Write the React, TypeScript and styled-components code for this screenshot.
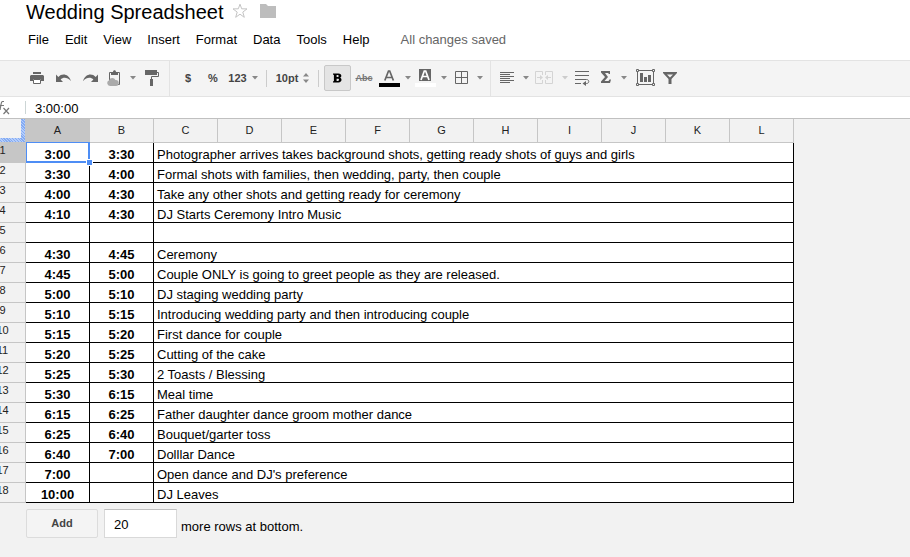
import React from "react";
import styled, { createGlobalStyle, css } from "styled-components";

const GlobalStyle = createGlobalStyle`
  * { box-sizing: border-box; }
  html, body { margin: 0; min-height: 100%; background: #f2f2f2; }
  body { font-family: "Liberation Sans", Arial, sans-serif; font-size: 13px; color: #000; overflow-x: hidden; }
  button, input { font-family: inherit; }
`;

const Header = styled.header`
  background: #fff;
  height: 60px;
  padding-left: 26px;
`;

const TitleRow = styled.div`
  display: flex;
  align-items: center;
  height: 24px;
`;

const Title = styled.h1`
  margin: 0 8px 0 0;
  font-size: 20px;
  line-height: 24px;
  font-weight: normal;
  white-space: nowrap;
`;

const TitleButton = styled.button`
  display: flex;
  padding: 0 0 2px;
  margin-right: 12px;
  border: 0;
  background: none;
`;

const MenuBar = styled.nav`
  display: flex;
  align-items: baseline;
  height: 30px;
  padding: 8px 0 0 2px;
  gap: 16px;
`;

const MenuItem = styled.button`
  padding: 0;
  border: 0;
  background: none;
  font-size: 13px;
  line-height: 16px;
  color: #000;
`;

const SaveStatus = styled.span`
  margin-left: 15px;
  color: #666;
  line-height: 16px;
  white-space: nowrap;
`;

const Toolbar = styled.div`
  display: flex;
  align-items: center;
  height: 37px;
  padding-left: 24px;
  border-top: 1px solid #e3e3e3;
  border-bottom: 1px solid #e3e3e3;
  background: #f4f4f4;
`;

const ToolGroup = styled.div<{ $start?: number; $end?: number }>`
  display: flex;
  flex: none;
  align-items: center;
  height: 35px;
  padding: 0 ${(p) => p.$end ?? 0}px 1px ${(p) => p.$start ?? 0}px;
  & + & { border-left: 1px solid #e3e3e3; }
`;

const ToolButton = styled.button<{ $width: number; $gap?: number; $active?: boolean }>`
  display: flex;
  flex: none;
  align-items: center;
  justify-content: center;
  gap: ${(p) => p.$gap ?? 7}px;
  width: ${(p) => p.$width}px;
  height: 26px;
  padding: 0;
  border: 1px solid transparent;
  border-radius: 2px;
  background: none;
  color: #444;
  font-size: 11px;
  font-weight: bold;
  line-height: 16px;
  ${(p) =>
    p.$active &&
    css`
      border-color: #c8c8c8;
      background: #e4e4e4;
      color: #000;
    `}
`;

const StruckText = styled.s`
  color: #777;
  font-size: 9px;
  line-height: 16px;
`;

const Separator = styled.span`
  flex: none;
  width: 1px;
  height: 17px;
  margin: 0 5px;
  background: #ccc;
`;

const FormulaBar = styled.div`
  display: flex;
  align-items: center;
  height: 22px;
  border-bottom: 1px solid #c0c0c0;
  background: #fff;
`;

const FormulaInput = styled.input`
  flex: 1;
  min-width: 0;
  height: 13px;
  margin-left: 15px;
  padding: 1px 0 0 9px;
  border: 0;
  border-left: 1px solid #ccd5d5;
  outline: 0;
  font-size: 13px;
`;

const SheetArea = styled.main`
  overflow: hidden;
`;

const Sheet = styled.table`
  width: 814px;
  margin-left: -20px;
  table-layout: fixed;
  border-collapse: separate;
  border-spacing: 0;
`;

const Corner = styled.td`
  position: relative;
  height: 24px;
  padding: 0;
  background: #f2f2f2;
`;

const CornerHatch = styled.span`
  position: absolute;
  inset: 0;
  border-right: 1px solid #c6c6c6;
  border-bottom: 1px solid #c6c6c6;
  background: repeating-linear-gradient(45deg, #b4cdfb 0 1px, #84abf2 1px 2px);
  clip-path: polygon(100% 0, 100% 100%, 0 100%, 0 calc(100% - 5px), calc(100% - 5px) calc(100% - 5px), calc(100% - 5px) 0);
`;

const ColumnHead = styled.th<{ $selected?: boolean }>`
  height: 24px;
  padding: 0 0 2px;
  border-right: 1px solid #c6c6c6;
  border-bottom: 1px solid #c6c6c6;
  background: ${(p) => (p.$selected ? "#c6c6c6" : "#f2f2f2")};
  color: #222;
  font-size: 11px;
  font-weight: normal;
`;

const RowHead = styled.th<{ $selected?: boolean }>`
  height: 20px;
  padding: 0;
  border-right: 1px solid #c6c6c6;
  border-bottom: 1px solid #c6c6c6;
  background: ${(p) => (p.$selected ? "#c6c6c6" : "#f2f2f2")};
  color: #222;
  font-size: 11px;
  font-weight: normal;
  line-height: 15px;
  vertical-align: top;
`;

const Cell = styled.td<{ $time?: boolean }>`
  position: relative;
  height: 20px;
  padding: 4px 3px 0;
  border-right: 1px solid #000;
  border-bottom: 1px solid #000;
  background: #fff;
  font-size: 13px;
  line-height: 15px;
  white-space: nowrap;
  ${(p) => p.$time && css`text-align: center; font-weight: bold;`}
`;

const Selection = styled.span`
  position: absolute;
  inset: -1px -1px -1px 0;
  border: 1px solid #4d8df5;
  border-right-width: 2px;
  border-bottom-width: 2px;
  z-index: 1;
`;

const FillHandle = styled.span`
  position: absolute;
  right: -5px;
  bottom: -5px;
  width: 7px;
  height: 7px;
  border: 1px solid #fff;
  background: #4d8df5;
`;

const AddRows = styled.form`
  display: flex;
  align-items: center;
  padding: 6px 0 0 26px;
`;

const AddButton = styled.button`
  width: 72px;
  height: 29px;
  margin-right: 6px;
  padding: 0 0 1px;
  border: 1px solid #dcdcdc;
  border-radius: 2px;
  background: #f4f4f4;
  color: #444;
  font-size: 11px;
  font-weight: bold;
`;

const CountInput = styled.input`
  width: 73px;
  height: 29px;
  margin-right: 4px;
  padding: 2px 9px 0;
  border: 1px solid #d9d9d9;
  border-top-color: #c0c0c0;
  font-size: 13px;
`;

const AddLabel = styled.label`
  padding-top: 6px;
  line-height: 16px;
`;

const ink = "#666";

const Caret = ({ light }: { light?: boolean }) => (
  <svg width="6" height="4" viewBox="0 0 6 4" aria-hidden="true">
    <path d="M0 0h6L3 3.500z" fill={light ? "#ccc" : "#888"} />
  </svg>
);

const StarIcon = () => (
  <svg width="16" height="16" viewBox="0 0 16 16" fill="none" stroke="#c4c4c4">
    <path d="M8 1.200l1.700 4.600 5.300.1-4.200 3.200 1.500 5.200L8 11.200l-4.300 3.100 1.500-5.200L1 5.900l5.300-.1z" />
  </svg>
);
const FolderIcon = () => (
  <svg width="16" height="14" viewBox="0 0 16 14">
    <path d="M0 0h6l2 2h8v12H0z" fill="#bdbdbd" />
  </svg>
);
const PrintIcon = () => (
  <svg width="14" height="12" viewBox="0 0 14 12" fill={ink}>
    <path d="M3 0h8v2H3zM1 3h12l1 1v5h-3V7H3v2H0V4z" />
    <path d="M3.500 7.500h7v4h-7z" fill="#fff" stroke={ink} />
  </svg>
);
const UndoIcon = ({ flip }: { flip?: boolean }) => (
  <svg width="15" height="8" viewBox="0 0 15 8">
    <g transform={flip ? "translate(15 0) scale(-1 1)" : undefined}>
      <path d="M0 .5V8h7L4.600 5.500C7 3.200 11 2.800 15 7 12.500-.3 6-1 2.300 3z" fill={ink} />
    </g>
  </svg>
);
const ClipboardIcon = () => (
  <svg width="14" height="16" viewBox="0 0 14 16">
    <path d="M2.500 2.500h10v12h-10z" fill="none" stroke={ink} />
    <path d="M4 2h2c0-2.500 3-2.500 3 0h2v3H4z" fill={ink} />
    <path d="M3 16a3 3 0 01-.8-5.800A3.300 3.300 0 018.400 10 3 3 0 019 16z" fill="#aaa" />
  </svg>
);
const PaintIcon = () => (
  <svg width="14" height="16" viewBox="0 0 14 16">
    <path d="M0 0h12v5H0zM5 9h3v7H5z" fill={ink} />
    <path d="M12 2.500h1.500v4h-7V9" fill="none" stroke={ink} />
  </svg>
);
const UpDownIcon = () => (
  <svg width="6" height="10" viewBox="0 0 6 10" fill="#888">
    <path d="M3 0l3 3.500H0zM3 10L0 6.500h6z" />
  </svg>
);
const BoldIcon = () => (
  <svg width="9" height="10" viewBox="0 0 10 10">
    <path d="M0 0h6c4 0 4 4 1.700 4.700C10.500 5.500 10 10 6 10H0V8.500h1v-7H0zM4 1.800v2.200h1.500c1 0 1-2.200 0-2.200zM4 5.700v2.500h1.600c1.400 0 1.400-2.500 0-2.500z" fill="#000" fillRule="evenodd" />
  </svg>
);
const TextColorIcon = () => (
  <svg width="21" height="18" viewBox="0 0 21 18">
    <path d="M5.800 11.500L9.500 2h1.200l3.700 9.500M7.300 8.500h6" fill="none" stroke={ink} strokeWidth="1.700" />
    <path d="M0 14h21v4H0z" fill="#000" />
  </svg>
);
const FillColorIcon = () => (
  <svg width="21" height="18" viewBox="0 0 21 18">
    <path d="M4 0h12v12H4z" fill={ink} />
    <path d="M6 11l3.300-9h1.400l3.300 9M7.300 7.500h5.400" fill="none" stroke="#fff" strokeWidth="1.700" />
    <path d="M0 14h21v4H0z" fill="#fff" />
  </svg>
);
const BordersIcon = () => (
  <svg width="13" height="14" viewBox="0 0 13 14" fill="none" stroke={ink}>
    <path d="M.5.5h12v12H.5zM6.500 0v13M0 6.500h13" />
  </svg>
);
const AlignIcon = () => (
  <svg width="14" height="12" viewBox="0 0 14 12" stroke={ink}>
    <path d="M0 .5h14M0 2.500h10M0 4.500h14M0 6.500h10M0 8.500h14M0 10.500h10" />
  </svg>
);
const MergeIcon = () => (
  <svg width="18" height="14" viewBox="0 0 18 14" fill="none" stroke="#d4d4d4">
    <path d="M7.500 4V.5h-7v12h7V9M10.500 4V.5h7v12h-7V9M2 6.500h4M16 6.500h-4" />
    <path d="M5 4l3 2.500L5 9zM13 4l-3 2.500L13 9z" fill="#d4d4d4" stroke="none" />
  </svg>
);
const WrapIcon = () => (
  <svg width="15" height="16" viewBox="0 0 15 16" fill="none" stroke={ink}>
    <path d="M0 1.500h14M0 5.500h14M0 9.500h11.500c3 0 3 4 0 4H9M0 13.500h6" />
    <path d="M11 11v5l-3.500-2.500z" fill={ink} stroke="none" />
  </svg>
);
const SumIcon = () => (
  <svg width="10" height="14" viewBox="0 0 10 14">
    <path d="M0 0h9v3H8L7 2H4l3 4-3.500 4H7.500l1-1.500H10L9 12H0v-1.500L4 6 0 1.500z" fill={ink} />
  </svg>
);
const ChartIcon = () => (
  <svg width="19" height="18" viewBox="0 0 19 18">
    <path d="M1.500 1.500h16v14h-16z" fill="none" stroke={ink} />
    <path d="M4 4h3v9H4zM8 8h3v5H8zM12 6h3v7h-3z" fill={ink} />
    <path d="M.5.5h2v2h-2zM16.500.5h2v2h-2zM.5 14.500h2v2h-2zM16.500 14.500h2v2h-2z" fill="#f4f4f4" stroke={ink} />
  </svg>
);
const FilterIcon = () => (
  <svg width="14" height="12" viewBox="0 0 14 12">
    <path d="M0 0h14v1L8.500 7v5h-3V7L0 1z" fill={ink} />
    <path d="M4 2.500h6L7 5.500z" fill="#f4f4f4" />
  </svg>
);
const FxIcon = () => (
  <svg width="10" height="14" viewBox="0 0 10 14" fill="none" stroke="#777" strokeWidth="1.200">
    <path d="M4 .5H2.500Q1.500.5 1 3.500L0 9M0 4.500h4M3.500 7l5.500 6M9 7l-5.500 6" />
  </svg>
);

const menus = ["File", "Edit", "View", "Insert", "Format", "Data", "Tools", "Help"];
const columns = ["A", "B", "C", "D", "E", "F", "G", "H", "I", "J", "K", "L"];
const rows: [string, string, string][] = [
  ["3:00", "3:30", "Photographer arrives takes background shots, getting ready shots of guys and girls"],
  ["3:30", "4:00", "Formal shots with families, then wedding, party, then couple"],
  ["4:00", "4:30", "Take any other shots and getting ready for ceremony"],
  ["4:10", "4:30", "DJ Starts Ceremony Intro Music"],
  ["", "", ""],
  ["4:30", "4:45", "Ceremony"],
  ["4:45", "5:00", "Couple ONLY is going to greet people as they are released."],
  ["5:00", "5:10", "DJ staging wedding party"],
  ["5:10", "5:15", "Introducing wedding party and then introducing couple"],
  ["5:15", "5:20", "First dance for couple"],
  ["5:20", "5:25", "Cutting of the cake"],
  ["5:25", "5:30", "2 Toasts / Blessing"],
  ["5:30", "6:15", "Meal time"],
  ["6:15", "6:25", "Father daughter dance groom mother dance"],
  ["6:25", "6:40", "Bouquet/garter toss"],
  ["6:40", "7:00", "Dolllar Dance"],
  ["7:00", "", "Open dance and DJ's preference"],
  ["10:00", "", "DJ Leaves"],
];

export default function App() {
  return (
    <>
      <GlobalStyle />
      <Header>
        <TitleRow>
          <Title>Wedding Spreadsheet</Title>
          <TitleButton aria-label="Star"><StarIcon /></TitleButton>
          <TitleButton aria-label="Move to folder"><FolderIcon /></TitleButton>
        </TitleRow>
        <MenuBar>
          {menus.map((m) => <MenuItem key={m}>{m}</MenuItem>)}
          <SaveStatus>All changes saved</SaveStatus>
        </MenuBar>
      </Header>
      <Toolbar role="toolbar">
        <ToolGroup $end={5}>
          <ToolButton $width={26} aria-label="Print"><PrintIcon /></ToolButton>
          <ToolButton $width={27} aria-label="Undo"><UndoIcon /></ToolButton>
          <ToolButton $width={26} aria-label="Redo"><UndoIcon flip /></ToolButton>
          <ToolButton $width={37} $gap={9} aria-label="Web clipboard"><ClipboardIcon /><Caret /></ToolButton>
          <ToolButton $width={24} aria-label="Paint format"><PaintIcon /></ToolButton>
        </ToolGroup>
        <ToolGroup $start={5}>
          <ToolButton $width={26}>$</ToolButton>
          <ToolButton $width={24}>%</ToolButton>
          <ToolButton $width={36} $gap={5}>123<Caret /></ToolButton>
          <Separator />
          <ToolButton $width={41} $gap={5}>10pt<UpDownIcon /></ToolButton>
          <Separator />
          <ToolButton $width={27} $active aria-label="Bold" aria-pressed="true"><BoldIcon /></ToolButton>
          <ToolButton $width={26} aria-label="Strikethrough"><StruckText>Abc</StruckText></ToolButton>
          <ToolButton $width={36} $gap={5} aria-label="Text color"><TextColorIcon /><Caret /></ToolButton>
          <ToolButton $width={35} $gap={5} aria-label="Fill color"><FillColorIcon /><Caret /></ToolButton>
          <ToolButton $width={42} $gap={9} aria-label="Borders"><BordersIcon /><Caret /></ToolButton>
        </ToolGroup>
        <ToolGroup $start={5}>
          <ToolButton $width={37} $gap={9} aria-label="Align"><AlignIcon /><Caret /></ToolButton>
          <ToolButton $width={37} $gap={9} aria-label="Merge cells"><MergeIcon /><Caret light /></ToolButton>
          <ToolButton $width={25} aria-label="Wrap text"><WrapIcon /></ToolButton>
          <ToolButton $width={38} $gap={10} aria-label="Functions"><SumIcon /><Caret /></ToolButton>
          <ToolButton $width={24} aria-label="Insert chart"><ChartIcon /></ToolButton>
          <ToolButton $width={26} aria-label="Filter"><FilterIcon /></ToolButton>
        </ToolGroup>
      </Toolbar>
      <FormulaBar>
        <FxIcon />
        <FormulaInput aria-label="Formula" defaultValue="3:00:00" />
      </FormulaBar>
      <SheetArea>
        <Sheet>
          <colgroup>
            <col width="46" />
            {columns.map((c) => <col key={c} width="64" />)}
          </colgroup>
          <thead>
            <tr>
              <Corner><CornerHatch /></Corner>
              {columns.map((c) => <ColumnHead key={c} scope="col" $selected={c === "A"}>{c}</ColumnHead>)}
            </tr>
          </thead>
          <tbody>
            {rows.map(([start, end, text], i) => (
              <tr key={i}>
                <RowHead scope="row" $selected={i === 0}>{i + 1}</RowHead>
                <Cell $time>{start}{i === 0 && <Selection><FillHandle /></Selection>}</Cell>
                <Cell $time>{end}</Cell>
                <Cell colSpan={10}>{text}</Cell>
              </tr>
            ))}
          </tbody>
        </Sheet>
        <AddRows onSubmit={(e) => e.preventDefault()}>
          <AddButton type="submit">Add</AddButton>
          <CountInput id="row-count" defaultValue="20" />
          <AddLabel htmlFor="row-count">more rows at bottom.</AddLabel>
        </AddRows>
      </SheetArea>
    </>
  );
}
